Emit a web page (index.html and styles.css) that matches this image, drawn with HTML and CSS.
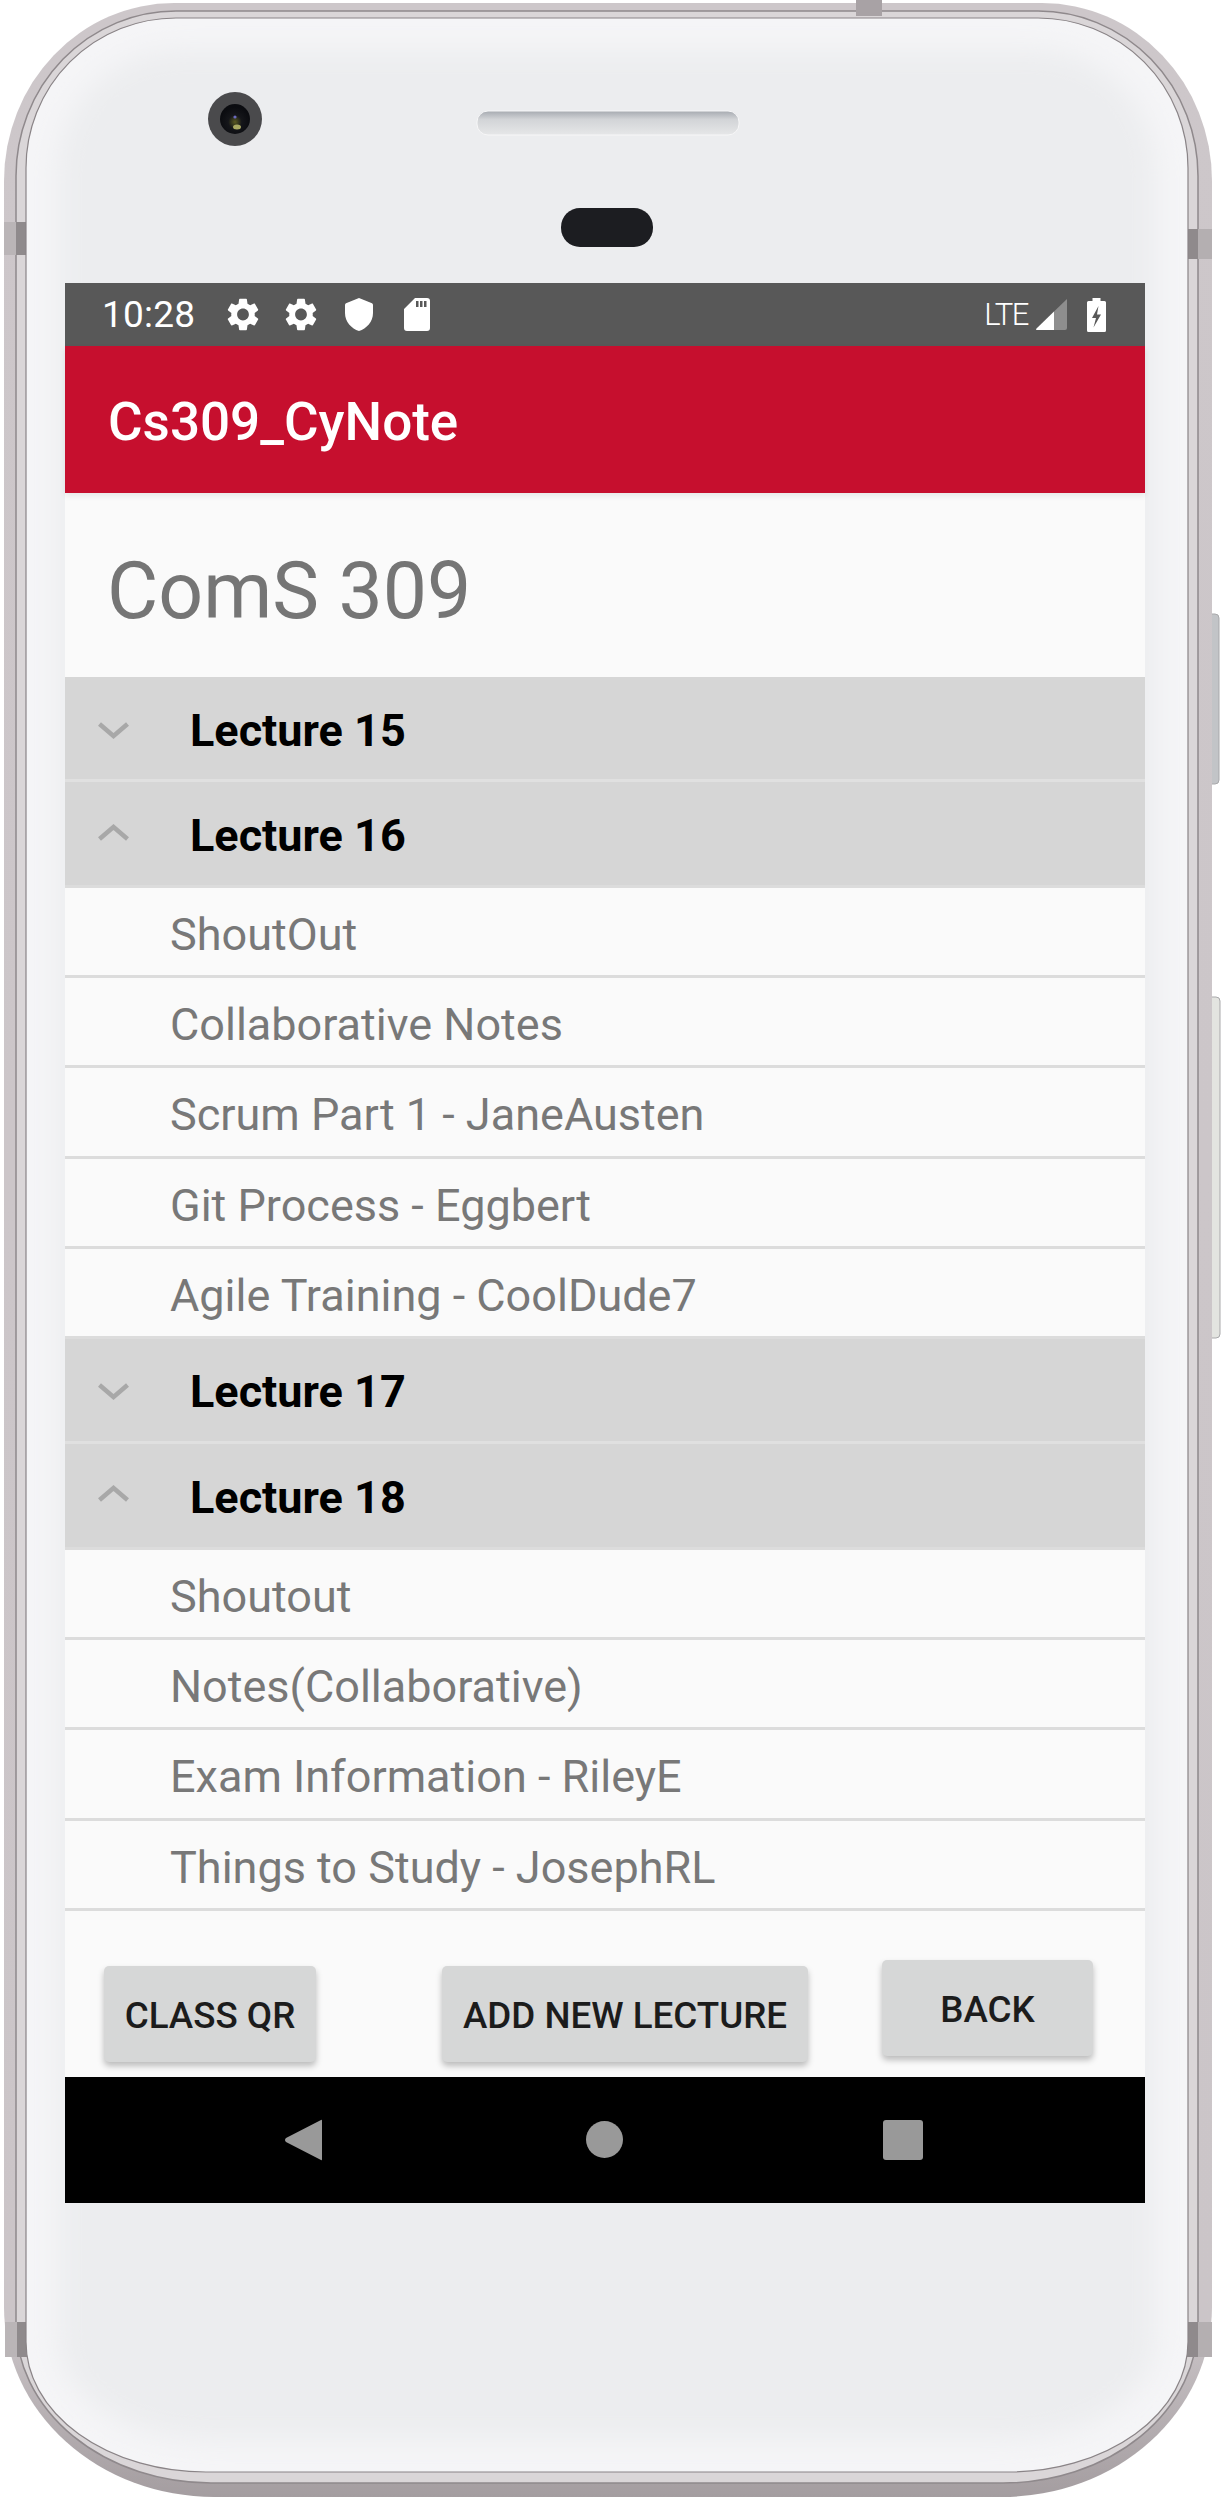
FILE: index.html
```html
<!DOCTYPE html>
<html lang="en">

<head>
    <meta charset="UTF-8">
    <meta name="viewport" content="width=device-width, initial-scale=1.0">
    <title>Cs309_CyNote</title>
    <link rel="stylesheet" href="styles.css">
</head>

<body>
    <div class="phone">
        <!-- Phone body, drawn behind the screen -->
        <svg class="phone-body" viewBox="0 0 1222 2498" aria-hidden="true">
            <defs>
                <linearGradient id="metal" x1="0" y1="0" x2="0" y2="1">
                    <stop offset="0" stop-color="#cdc7ca"/>
                    <stop offset="0.93" stop-color="#cbc5c8"/>
                    <stop offset="1" stop-color="#a49da0"/>
                </linearGradient>
                <radialGradient id="lens" cx="0.5" cy="0.6" r="0.5">
                    <stop offset="0" stop-color="#5a5a22"/>
                    <stop offset="0.45" stop-color="#15161a"/>
                    <stop offset="1" stop-color="#0b0c10"/>
                </radialGradient>
                <linearGradient id="grille" x1="0" y1="0" x2="0" y2="1">
                    <stop offset="0" stop-color="#a6aab0"/>
                    <stop offset="0.35" stop-color="#d2d4d7"/>
                    <stop offset="1" stop-color="#e6e7e8"/>
                </linearGradient>
                <filter id="soft" x="-5%" y="-5%" width="110%" height="110%">
                    <feGaussianBlur stdDeviation="14"/>
                </filter>
            </defs>

            <!-- side buttons -->
            <rect x="1206" y="614" width="13" height="170" rx="4" fill="#c2c4c7" stroke="#a9a9ab"/>
            <rect x="1206" y="997" width="14" height="341" rx="4" fill="#e3e4e0" stroke="#a9a9ab"/>

            <!-- metal frame -->
            <path d="M174 3 H1042 A170 178 0 0 1 1212 181 V2307 A210 190 0 0 1 1002 2497 H214 A210 190 0 0 1 4 2307 V181 A170 178 0 0 1 174 3 Z" fill="url(#metal)"/>
            <path d="M176 11 H1038 A160 165 0 0 1 1198 176 V2323 A195 160 0 0 1 1003 2483 H211 A195 160 0 0 1 16 2323 V176 A160 165 0 0 1 176 11 Z" fill="#dad6d8" stroke="#8f898c" stroke-width="1.5"/>

            <!-- antenna bands -->
            <rect x="856" y="0" width="26" height="16" fill="#a8a2a5"/>
            <rect x="4" y="222" width="12" height="33" fill="#bab5b7"/>
            <rect x="16" y="222" width="10" height="33" fill="#8f8a8c"/>
            <rect x="1188" y="229" width="10" height="30" fill="#8f8a8c"/>
            <rect x="1198" y="229" width="14" height="30" fill="#b4afb1"/>
            <rect x="5" y="2322" width="12" height="35" fill="#bab5b7"/>
            <rect x="17" y="2322" width="11" height="35" fill="#8f8a8c"/>
            <rect x="1187" y="2322" width="11" height="35" fill="#8f8a8c"/>
            <rect x="1198" y="2322" width="14" height="35" fill="#b4afb1"/>

            <!-- front glass -->
            <path d="M176 18 H1038 A150 150 0 0 1 1188 168 V2342 A180 130 0 0 1 1008 2472 H206 A180 130 0 0 1 26 2342 V168 A150 150 0 0 1 176 18 Z" fill="#f5f5f7" stroke="#8a8487" stroke-width="1.2"/>
            <path d="M178 50 H1036 A120 120 0 0 1 1156 170 V2340 A150 100 0 0 1 1006 2440 H208 A150 100 0 0 1 58 2340 V170 A120 120 0 0 1 178 50 Z" fill="#ecedef" filter="url(#soft)"/>

            <!-- camera -->
            <circle cx="235" cy="119" r="27" fill="#4a4a4c"/>
            <circle cx="235" cy="119" r="15" fill="url(#lens)"/>
            <circle cx="235" cy="117" r="1.6" fill="#6a6ac0"/>
            <ellipse cx="237" cy="127" rx="4" ry="2.5" fill="#a8a860"/>

            <!-- speaker -->
            <rect x="477" y="111" width="262" height="24" rx="11" fill="url(#grille)" stroke="#f7f7f8" stroke-width="1"/>

            <!-- sensor -->
            <rect x="561" y="208" width="92" height="39" rx="19" ry="19" fill="#1c1d21"/>
        </svg>

        <div class="screen">
            <div class="status-bar">
                <span class="clock">10:28</span>
                <svg class="gear" viewBox="2.2 2 19.6 20"><path d="M19.14 12.94c.04-.3.06-.61.06-.94 0-.32-.02-.64-.07-.94l2.03-1.58c.18-.14.23-.41.12-.61l-1.92-3.32c-.12-.22-.37-.29-.59-.22l-2.39.96c-.5-.38-1.03-.7-1.62-.94l-.36-2.54c-.04-.24-.24-.41-.48-.41h-3.84c-.24 0-.43.17-.47.41l-.36 2.54c-.59.24-1.13.57-1.62.94l-2.39-.96c-.22-.08-.47 0-.59.22L2.74 8.87c-.12.21-.08.47.12.61l2.03 1.58c-.05.3-.09.63-.09.94s.02.64.07.94l-2.03 1.58c-.18.14-.23.41-.12.61l1.92 3.32c.12.22.37.29.59.22l2.39-.96c.5.38 1.03.7 1.62.94l.36 2.54c.05.24.24.41.48.41h3.84c.24 0 .44-.17.47-.41l.36-2.54c.59-.24 1.13-.56 1.62-.94l2.39.96c.22.08.47 0 .59-.22l1.92-3.32c.12-.22.07-.47-.12-.61l-2.01-1.58zM12 15.6c-1.98 0-3.6-1.62-3.6-3.6s1.62-3.6 3.6-3.6 3.6 1.62 3.6 3.6-1.62 3.6-3.6 3.6z"/></svg>
                <svg class="gear" viewBox="2.2 2 19.6 20"><path d="M19.14 12.94c.04-.3.06-.61.06-.94 0-.32-.02-.64-.07-.94l2.03-1.58c.18-.14.23-.41.12-.61l-1.92-3.32c-.12-.22-.37-.29-.59-.22l-2.39.96c-.5-.38-1.03-.7-1.62-.94l-.36-2.54c-.04-.24-.24-.41-.48-.41h-3.84c-.24 0-.43.17-.47.41l-.36 2.54c-.59.24-1.13.57-1.62.94l-2.39-.96c-.22-.08-.47 0-.59.22L2.74 8.87c-.12.21-.08.47.12.61l2.03 1.58c-.05.3-.09.63-.09.94s.02.64.07.94l-2.03 1.58c-.18.14-.23.41-.12.61l1.92 3.32c.12.22.37.29.59.22l2.39-.96c.5.38 1.03.7 1.62.94l.36 2.54c.05.24.24.41.48.41h3.84c.24 0 .44-.17.47-.41l.36-2.54c.59-.24 1.13-.56 1.62-.94l2.39.96c.22.08.47 0 .59-.22l1.92-3.32c.12-.22.07-.47-.12-.61l-2.01-1.58zM12 15.6c-1.98 0-3.6-1.62-3.6-3.6s1.62-3.6 3.6-3.6 3.6 1.62 3.6 3.6-1.62 3.6-3.6 3.6z"/></svg>
                <svg class="shield" viewBox="0 0 28 33"><path d="M14 0 L27 5.2 Q28 5.6 28 7 V15 C28 24 21.5 30.5 14 33 C6.5 30.5 0 24 0 15 V7 Q0 5.6 1 5.2 Z"/></svg>
                <svg class="sdcard" viewBox="0 0 26 33"><path fill-rule="evenodd" d="M11 0 H23 Q26 0 26 3 V30 Q26 33 23 33 H3 Q0 33 0 30 V11 Z M12 3 V9 H14.5 V3 Z M16 3 V9 H18.5 V3 Z M20 3 V9 H22.5 V3 Z"/></svg>
                <span class="network">LTE</span>
                <svg class="signal" viewBox="0 0 31 31"><path d="M31 0 V29 Q31 31 29 31 H18 V12.5 Z" fill="#8e8e8e"/><path d="M18 12.5 V31 H1 Q-.5 31 .5 29.5 Z" fill="#fff"/></svg>
                <svg class="battery" viewBox="0 0 19 34"><path fill-rule="evenodd" d="M5.5 0 H13.5 V3 H17.5 Q19 3 19 4.5 V32.5 Q19 34 17.5 34 H1.5 Q0 34 0 32.5 V4.5 Q0 3 1.5 3 H5.5 Z M11.5 8 L5 20 H9 L6.5 29.5 L14 16.5 H10 Z"/></svg>
            </div>

            <header class="app-bar">Cs309_CyNote</header>

            <h1 class="course-title">ComS 309</h1>

            <div class="lecture-list">
                <div class="lecture">
                    <svg class="chevron" viewBox="0 0 31 17"><path d="M1.5 2 L15.5 14 L29.5 2"/></svg>
                    <span>Lecture 15</span>
                </div>
                <div class="lecture open">
                    <svg class="chevron" viewBox="0 0 31 17"><path d="M1.5 15 L15.5 3 L29.5 15"/></svg>
                    <span>Lecture 16</span>
                </div>
                <div class="item">ShoutOut</div>
                <div class="item">Collaborative Notes</div>
                <div class="item">Scrum Part 1 - JaneAusten</div>
                <div class="item">Git Process - Eggbert</div>
                <div class="item">Agile Training - CoolDude7</div>
                <div class="lecture">
                    <svg class="chevron" viewBox="0 0 31 17"><path d="M1.5 2 L15.5 14 L29.5 2"/></svg>
                    <span>Lecture 17</span>
                </div>
                <div class="lecture open">
                    <svg class="chevron" viewBox="0 0 31 17"><path d="M1.5 15 L15.5 3 L29.5 15"/></svg>
                    <span>Lecture 18</span>
                </div>
                <div class="item">Shoutout</div>
                <div class="item">Notes(Collaborative)</div>
                <div class="item">Exam Information - RileyE</div>
                <div class="item">Things to Study - JosephRL</div>
            </div>

            <div class="actions">
                <button class="btn btn-qr">Class QR</button>
                <button class="btn btn-add">Add New Lecture</button>
                <button class="btn btn-back">Back</button>
            </div>

            <div class="nav-bar">
                <svg class="nav-back" viewBox="0 0 37 42"><path d="M36 1 Q37 0 37 2 V40 Q37 42 36 41 L1 23 Q-1 21 1 19 Z"/></svg>
                <svg class="nav-home" viewBox="0 0 37 37"><circle cx="18.5" cy="18.5" r="18.5"/></svg>
                <svg class="nav-recent" viewBox="0 0 40 40"><rect width="40" height="40" rx="3"/></svg>
            </div>
        </div>
    </div>
</body>

</html>
```

FILE: styles.css
```css
/* Page and phone */
body {
    margin: 0;
    background-color: #fff;
    font-family: Roboto, "Noto Sans", sans-serif;
}

.phone {
    position: relative;
    width: 1222px;
    height: 2498px;
    overflow: hidden;
}

.phone-body {
    position: absolute;
    top: 0;
    left: 0;
    width: 1222px;
    height: 2498px;
}

.screen {
    position: relative;
    width: 1080px;
    margin-left: 65px;
    padding-top: 283px;
}

/* Status bar */
.status-bar {
    height: 63px;
    background-color: #585858;
    display: flex;
    align-items: center;
    padding-left: 37px;
    color: #fff;
    fill: #fff;
}

.clock {
    font-size: 37px;
    width: 125px;
    letter-spacing: 0.2px;
}

.gear {
    width: 32px;
    height: 33px;
    margin-right: 26px;
}

.shield {
    width: 28px;
    height: 33px;
    margin-left: 2px;
    margin-right: 31px;
}

.sdcard {
    width: 26px;
    height: 33px;
}

.network {
    margin-left: auto;
    font-size: 31px;
    font-weight: 300;
    letter-spacing: -1.5px;
    margin-right: 8px;
}

.signal {
    width: 31px;
    height: 31px;
    margin-right: 20px;
}

.battery {
    width: 19px;
    height: 34px;
    margin-right: 39px;
}

/* Toolbar */
.app-bar {
    position: relative;
    height: 147px;
    background-color: #c60f2e;
    color: #fff;
    font-size: 53px;
    font-weight: 500;
    line-height: 153px;
    padding-left: 43px;
    box-shadow: 0 3px 6px rgba(0, 0, 0, 0.08);
}

.course-title {
    margin: 0;
    height: 184px;
    background-color: #fafafa;
    color: #757575;
    font-size: 78.75px;
    font-weight: 400;
    line-height: 196px;
    padding-left: 42px;
}

/* Expandable list */
.lecture {
    height: 105px;
    background-color: #d6d6d6;
    border-bottom: 3px solid #e0e0e0;
    box-sizing: border-box;
    display: flex;
    align-items: center;
    padding: 4px 0 0 33px;
    font-size: 45px;
    font-weight: 700;
    color: #000;
}

.lecture.open {
    height: 106px;
    border-bottom-color: #dcdcdc;
}

.chevron {
    width: 31px;
    height: 17px;
    margin-right: 61px;
    fill: none;
    stroke: #a8a8a8;
    stroke-width: 4.5;
}

.open .chevron {
    margin-bottom: 7px;
}

.item {
    height: 90.2px;
    box-sizing: border-box;
    background-color: #fafafa;
    border-bottom: 3px solid #dcdcdc;
    color: #787878;
    font-size: 45px;
    line-height: 85px;
    padding: 4px 0 0 105px;
}

/* Bottom buttons */
.actions {
    height: 166.2px;
    box-sizing: border-box;
    background-color: #fafafa;
    display: flex;
    align-items: flex-start;
    padding: 49px 0 0 39px;
}

.btn {
    height: 96px;
    border: none;
    border-radius: 5px;
    background-color: #d6d7d7;
    color: #1c1c1c;
    font-family: inherit;
    font-size: 36.75px;
    font-weight: 500;
    text-transform: uppercase;
    box-shadow: 0 4px 6px rgba(0, 0, 0, 0.25);
    padding: 3px 0 0;
}

.btn-qr {
    width: 212px;
    margin-top: 6px;
}

.btn-add {
    width: 366px;
    margin-top: 6px;
    margin-left: 126px;
}

.btn-back {
    width: 211px;
    margin-left: 74px;
}

/* Navigation bar */
.nav-bar {
    height: 126px;
    background-color: #000;
    display: flex;
    align-items: center;
    padding-left: 220px;
    fill: #999;
}

.nav-back {
    width: 37px;
    height: 42px;
    margin-right: 264px;
}

.nav-home {
    width: 37px;
    height: 37px;
    margin-right: 260px;
}

.nav-recent {
    width: 40px;
    height: 40px;
}
```
